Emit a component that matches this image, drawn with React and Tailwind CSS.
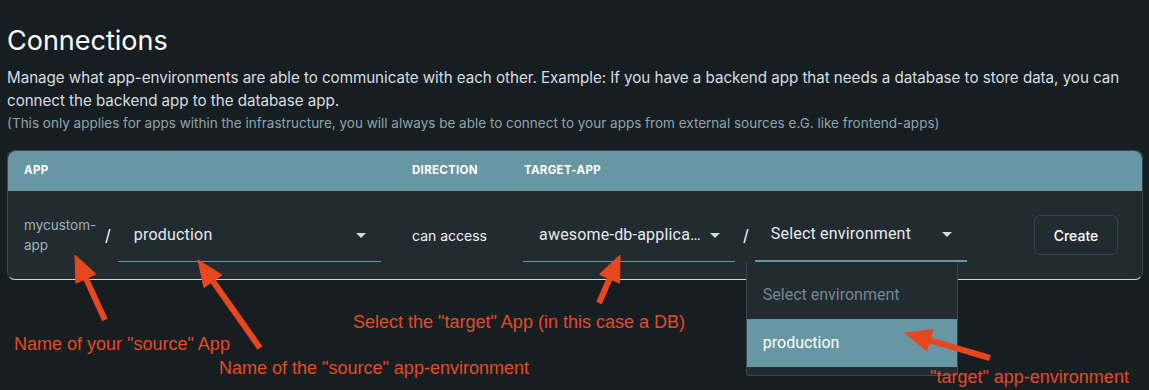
import React from "react";

// Pfeil aus Schaft + Spitze, Koordinaten in Seiten-Pixeln
function arrowHead(tail, tip, len = 26, half = 11) {
  const dx = tip[0] - tail[0];
  const dy = tip[1] - tail[1];
  const l = Math.hypot(dx, dy);
  const ux = dx / l;
  const uy = dy / l;
  const bx = tip[0] - len * ux;
  const by = tip[1] - len * uy;
  const px = -uy;
  const py = ux;
  return {
    base: [bx, by],
    points: `${tip[0]},${tip[1]} ${bx + half * px},${by + half * py} ${bx - half * px},${by - half * py}`,
  };
}

const ARROWS = [
  { tail: [105, 320], tip: [75, 255] },
  { tail: [260, 348], tip: [198, 260] },
  { tail: [599, 303], tip: [620, 255] },
  { tail: [990, 358], tip: [905, 333] },
];

const NOTES = [
  { text: 'Name of your "source" App', cls: "left-[14px] top-[334px]" },
  { text: 'Name of the "source" app-environment', cls: "left-[219px] top-[358px]" },
  { text: 'Select the "target" App (in this case a DB)', cls: "left-[353px] top-[312px]" },
  { text: '"target" app-environment', cls: "left-[930px] top-[367px]" },
];

function Caret() {
  return (
    <svg width="24" height="24" viewBox="0 0 24 24" className="shrink-0 text-[#d3dbde]">
      <path d="M7 10l5 5 5-5z" fill="currentColor" />
    </svg>
  );
}

function Select({ value, width, focused }) {
  return (
    <div
      className={`flex h-[54px] items-center justify-between pl-4 pr-2 font-['Roboto',sans-serif] ${width} ${
        focused ? "border-b-2 border-[#6797a2]" : "border-b border-[#6797a2]"
      }`}
    >
      <span className="truncate text-[16px] tracking-[0.2px] text-[#e6ecee]">{value}</span>
      <Caret />
    </div>
  );
}

export default function App() {
  return (
    <div className="relative h-[390px] w-full overflow-hidden bg-[#171e21] px-[7px] pt-[24px] font-['Inter',sans-serif]">
      <h1 className="text-[27px] leading-[34px] text-white">Connections</h1>
      <p className="mt-2 w-[1140px] text-[15.2px] tracking-[-0.05px] leading-[23px] text-[#d5dde0]">
        Manage what app-environments are able to communicate with each other. Example: If you have a
        backend app that needs a database to store data, you can connect the backend app to the database
        app.
      </p>
      <p className="mt-[1px] text-[13.5px] leading-[20px] text-[#8ea5ac]">
        (This only applies for apps within the infrastructure, you will always be able to connect to your
        apps from external sources e.G. like frontend-apps)
      </p>

      {/* Tabelle */}
      <div className="mt-[17px] w-[1136px] rounded-lg border border-[#3a484d] border-b-[#cfdadd] bg-[#212b30]">
        <div className="flex h-[40px] items-center rounded-t-lg bg-[#6797a2] px-[16px] text-[11.5px] font-bold tracking-[0.3px] text-white">
          <div className="w-[388px]">APP</div>
          <div className="w-[112px]">DIRECTION</div>
          <div>TARGET-APP</div>
        </div>
        <div className="flex h-[88px] items-center px-[16px]">
          <div className="flex w-[388px] items-center">
            <div className="w-[74px] text-[13.5px] leading-[20px] text-[#9fb2b8]">
              mycustom-
              <br />
              app
            </div>
            <span className="ml-[7px] text-[16px] text-white">/</span>
            <div className="ml-[7px]">
              <Select value="production" width="w-[263px]" />
            </div>
          </div>
          <div className="w-[111px] text-[14px] text-[#eef2f3]">can access</div>
          <Select value="awesome-db-application" width="w-[212px]" />
          <span className="ml-[8px] text-[16px] text-white">/</span>
          <div className="relative ml-[6px]">
            <Select value="Select environment" width="w-[212px]" focused />
            <div className="absolute left-[-9px] top-full z-10 w-[212px] rounded-b border border-t-0 border-[#3a484d] bg-[#212b30] pb-[8px] pt-[9px] font-['Roboto',sans-serif] text-[16px]">
              <div className="flex h-[48px] items-center px-4 text-[#77888e]">Select environment</div>
              <div className="flex h-[48px] items-center bg-[#6797a2] px-4 text-white">production</div>
            </div>
          </div>
          <button className="ml-auto mr-[8px] h-[40px] w-[84px] rounded-md border border-[#3a4a50] text-[14px] font-medium text-white">
            Create
          </button>
        </div>
      </div>

      {/* Anmerkungen */}
      <svg className="pointer-events-none absolute left-0 top-0 z-20" width="1149" height="390">
        {ARROWS.map((a, i) => {
          const h = arrowHead(a.tail, a.tip);
          return (
            <g key={i} fill="#e8461e" stroke="#e8461e">
              <line x1={a.tail[0]} y1={a.tail[1]} x2={h.base[0]} y2={h.base[1]} strokeWidth="6" />
              <polygon points={h.points} strokeWidth="1" strokeLinejoin="round" />
            </g>
          );
        })}
      </svg>
      {NOTES.map((n) => (
        <div
          key={n.text}
          className={`absolute z-20 whitespace-nowrap font-['Liberation_Sans',Arial,sans-serif] text-[18px] leading-[20px] text-[#e54a24] ${n.cls}`}
        >
          {n.text}
        </div>
      ))}
    </div>
  );
}
